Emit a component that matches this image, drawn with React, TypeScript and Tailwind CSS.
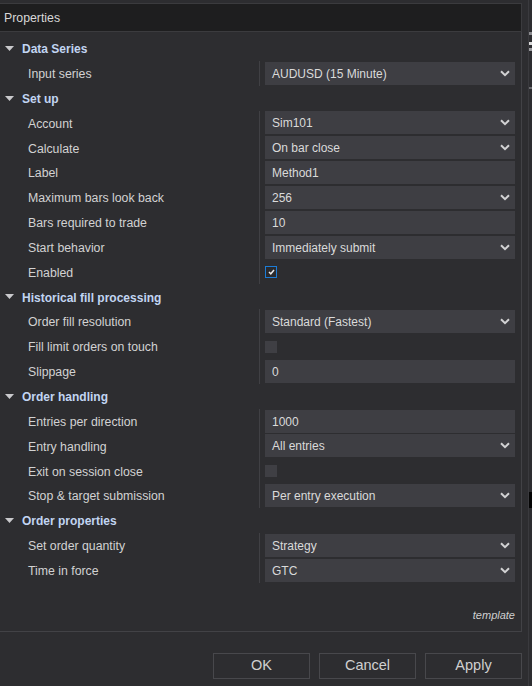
import React from 'react';

type Row = { label: string; kind: 'select' | 'text' | 'check'; value?: string; checked?: boolean };
type Group = { title: string; rows: Row[] };

const groups: Group[] = [
  { title: 'Data Series', rows: [{ label: 'Input series', kind: 'select', value: 'AUDUSD (15 Minute)' }] },
  {
    title: 'Set up',
    rows: [
      { label: 'Account', kind: 'select', value: 'Sim101' },
      { label: 'Calculate', kind: 'select', value: 'On bar close' },
      { label: 'Label', kind: 'text', value: 'Method1' },
      { label: 'Maximum bars look back', kind: 'select', value: '256' },
      { label: 'Bars required to trade', kind: 'text', value: '10' },
      { label: 'Start behavior', kind: 'select', value: 'Immediately submit' },
      { label: 'Enabled', kind: 'check', checked: true },
    ],
  },
  {
    title: 'Historical fill processing',
    rows: [
      { label: 'Order fill resolution', kind: 'select', value: 'Standard (Fastest)' },
      { label: 'Fill limit orders on touch', kind: 'check', checked: false },
      { label: 'Slippage', kind: 'text', value: '0' },
    ],
  },
  {
    title: 'Order handling',
    rows: [
      { label: 'Entries per direction', kind: 'text', value: '1000' },
      { label: 'Entry handling', kind: 'select', value: 'All entries' },
      { label: 'Exit on session close', kind: 'check', checked: false },
      { label: 'Stop & target submission', kind: 'select', value: 'Per entry execution' },
    ],
  },
  {
    title: 'Order properties',
    rows: [
      { label: 'Set order quantity', kind: 'select', value: 'Strategy' },
      { label: 'Time in force', kind: 'select', value: 'GTC' },
    ],
  },
];

function Chevron() {
  return (
    <svg width="10" height="7" viewBox="0 0 10 7" className="shrink-0">
      <path d="M1 1.2 L5 5.2 L9 1.2" stroke="#d2d2d4" strokeWidth="2" fill="none" />
    </svg>
  );
}

function Value({ row }: { row: Row }) {
  if (row.kind === 'check') {
    return row.checked ? (
      <div className="w-[12px] h-[12px] border border-[#1c7cd6] bg-[#2a2a2d] flex items-center justify-center">
        <svg width="7" height="6" viewBox="0 0 7 6">
          <path d="M1 3 L2.8 4.8 L6 1" stroke="#e8e8e8" strokeWidth="1.5" fill="none" />
        </svg>
      </div>
    ) : (
      <div className="w-[12px] h-[12px] bg-[#3f3f44]" />
    );
  }
  return (
    <div className="w-[250px] h-[23px] bg-[#3e3e43] flex items-center pl-[7px] pr-[5px] text-[12px] text-[#dadada]">
      <span className="flex-1 pt-[1px]">{row.value}</span>
      {row.kind === 'select' && <Chevron />}
    </div>
  );
}

export default function App() {
  return (
    <div className="w-[532px] h-[686px] bg-[#2d2d30] flex overflow-hidden font-['Liberation_Sans',Arial,sans-serif]">
      <div className="w-[528px] flex flex-col">
        <div className="h-[3px]" />
        <div className="w-[522px] h-[29px] bg-[#1e1e1f] border-t border-b border-r border-[#3b3b3e] flex items-center pl-[4px] pt-[1px] text-[12.3px] text-[#d8d8d8]">
          Properties
        </div>

        <div className="w-[522px] h-[600px] border-r border-b border-[#424246] flex flex-col pt-[4px]">
          {groups.map((g) => (
            <div key={g.title}>
              <div className="h-[24.85px] flex items-center">
                <svg width="9" height="5" viewBox="0 0 9 5" className="ml-[5px] mr-[8px]">
                  <path d="M0 0 H9 L4.5 5 Z" fill="#c9c9cc" />
                </svg>
                <span className="pt-[2px] text-[12px] font-bold text-[#c2d5f2]">{g.title}</span>
              </div>
              {g.rows.map((r) => (
                <div key={r.label} className="h-[24.85px] flex">
                  <div className="w-[259px] flex items-center pl-[28px] pt-[2px] text-[12.3px] text-[#d2d2d2]">{r.label}</div>
                  <div className="flex-1 border-l border-[#404044] flex items-center pl-[5px]">
                    <Value row={r} />
                  </div>
                </div>
              ))}
            </div>
          ))}
          <div className="mt-auto pb-[8px] pr-[6px] text-right text-[11px] italic text-[#cfcfcf]">template</div>
        </div>

        <div className="flex gap-[9px] pt-[21px] pl-[213px]">
          {['OK', 'Cancel', 'Apply'].map((b) => (
            <button
              key={b}
              className="w-[97px] h-[26px] border border-[#48484c] bg-[#2d2d30] text-[14.5px] text-[#d0d0d0] flex items-center justify-center"
            >
              {b}
            </button>
          ))}
        </div>
      </div>

      <div className="w-[4px] border-l border-[#3a3a3e] flex flex-col">
        <div className="h-[32px]" />
        <div className="h-[3px] bg-[#8a8a8e]" />
        <div className="h-[7px]" />
        <div className="h-[3px] bg-[#d8d8d8]" />
        <div className="h-[3px]" />
        <div className="h-[3px] bg-[#9a9a9e]" />
        <div className="h-[36px]" />
        <div className="h-[2px] bg-[#6a6a6e]" />
        <div className="h-[403px]" />
        <div className="h-[16px] bg-[#050505]" />
      </div>
    </div>
  );
}
